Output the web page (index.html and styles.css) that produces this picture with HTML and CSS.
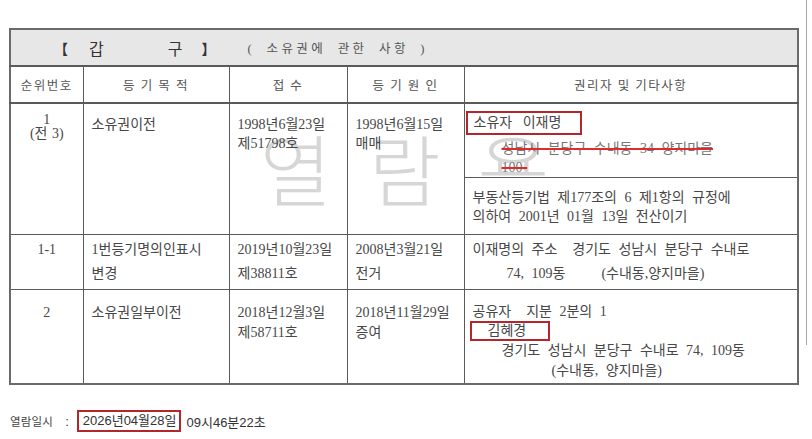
FILE: index.html
```html
<!DOCTYPE html>
<html lang="ko">
<head>
<meta charset="utf-8">
<title>갑구</title>
<link rel="stylesheet" href="styles.css">
</head>
<body>
<div class="page">
  <div class="wrap">
    <div class="watermark"><span>열</span><span>람</span><span>용</span></div>
    <table class="reg">
      <colgroup>
        <col class="w1"><col class="w2"><col class="w3"><col class="w4"><col class="w5">
      </colgroup>
      <tr class="title">
        <td colspan="5">
          <div class="title-in">
            <span class="br">【</span><span class="gap-a">갑</span><span class="gap-b">구</span><span class="br">】</span>
            <span class="sub">( 소유권에 관한 사항 )</span>
          </div>
        </td>
      </tr>
      <tr class="head">
        <th>순위번호</th>
        <th>등 기 목 적</th>
        <th>접 수</th>
        <th>등 기 원 인</th>
        <th>권리자 및 기타사항</th>
      </tr>
      <tr class="r1a">
        <td rowspan="2" class="num n1"><div class="ln14">1</div><div class="ln14 jeon">(전 3)</div></td>
        <td rowspan="2" class="txt p1"><div class="ln19">소유권이전</div></td>
        <td rowspan="2" class="txt p1"><div class="ln19">1998년6월23일</div><div class="ln19">제51798호</div></td>
        <td rowspan="2" class="txt p1"><div class="ln19">1998년6월15일</div><div class="ln19">매매</div></td>
        <td class="txt right-top">
          <div class="l1"><span class="mark mark-owner">소유자&nbsp;&nbsp;&nbsp;이재명</span></div>
          <div class="l2"><span class="strike">성남시 분당구 수내동 34 양지마을</span></div>
          <div class="l3"><span class="strike">100-</span></div>
        </td>
      </tr>
      <tr class="r1b">
        <td class="txt right-low"><div class="ln19">부동산등기법 제177조의 6 제1항의 규정에</div><div class="ln19">의하여 2001년 01월 13일 전산이기</div></td>
      </tr>
      <tr class="r2">
        <td class="num p2"><div class="ln24">1-1</div></td>
        <td class="txt p2"><div class="ln24">1번등기명의인표시</div><div class="ln24">변경</div></td>
        <td class="txt p2"><div class="ln24">2019년10월23일</div><div class="ln24">제38811호</div></td>
        <td class="txt p2"><div class="ln24">2008년3월21일</div><div class="ln24">전거</div></td>
        <td class="txt p2"><div class="ln24">이재명의 주소&nbsp;&nbsp;경기도 성남시 분당구 수내로</div><div class="ln24"><span class="ind1">74, 109동</span><span class="ind2">(수내동,양지마을)</span></div></td>
      </tr>
      <tr class="r3">
        <td class="num p3"><div class="ln20">2</div></td>
        <td class="txt p3"><div class="ln20">소유권일부이전</div></td>
        <td class="txt p3"><div class="ln20">2018년12월3일</div><div class="ln20">제58711호</div></td>
        <td class="txt p3"><div class="ln20">2018년11월29일</div><div class="ln20">증여</div></td>
        <td class="txt p3r">
          <div class="ln19">공유자&nbsp;&nbsp;지분 2분의 1</div>
          <div class="l-name"><span class="mark mark-name">김혜경</span></div>
          <div class="ln20 ind3">경기도 성남시 분당구 수내로 74, 109동</div>
          <div class="ln20 ind4">(수내동, 양지마을)</div>
        </td>
      </tr>
    </table>
  </div>
  <div class="footer">
    <span class="f-label">열람일시</span><span class="f-colon">:</span><span class="mark mark-date">2026년04월28일</span><span class="f-time">09시46분22초</span>
  </div>
</div>
</body>
</html>
```

FILE: styles.css
```css
html, body {
  margin: 0;
  padding: 0;
  background: #ffffff;
}

body {
  width: 812px;
  height: 439px;
  overflow: hidden;
  position: relative;
  font-family: "Liberation Serif", "Noto Sans CJK KR", serif;
  color: #474747;
}

body::after {
  content: "";
  position: absolute;
  left: 806px;
  top: 0;
  width: 1px;
  height: 345px;
  background: #a8a8a8;
}

.page {
  padding: 28px 0 0 9px;
}

.wrap {
  position: relative;
  width: 790px;
}

.watermark {
  position: absolute;
  left: 251px;
  top: 100px;
  z-index: 0;
  display: flex;
  gap: 37px;
  font-family: "Noto Sans CJK KR", sans-serif;
  font-weight: 300;
  font-size: 78px;
  line-height: 1;
  color: #d6d6d6;
  pointer-events: none;
}

.reg {
  position: relative;
  z-index: 1;
  width: 790px;
  table-layout: fixed;
  border-collapse: collapse;
  border: 2px solid #6a6a6a;
  font-size: 14px;
  letter-spacing: 0;
  word-spacing: 4px;
}

.w1 { width: 73px; }
.w2 { width: 146px; }
.w3 { width: 118px; }
.w4 { width: 117px; }
.w5 { width: 334px; }

.reg td, .reg th {
  border: 1px solid #5a5a5a;
  padding: 0;
  vertical-align: top;
}

.ln14, .ln19, .ln20, .ln24 {
  white-space: nowrap;
}
.ln14 { height: 14px; line-height: 14px; }
.ln19 { height: 19px; line-height: 19px; }
.ln20 { height: 20px; line-height: 20px; }
.ln24 { height: 24px; line-height: 24px; }

.jeon { word-spacing: 1px; }

/* rows */
.title { height: 37px; }
.head { height: 37px; }
.r1a { height: 74px; }
.r1b { height: 57px; }
.r2 { height: 55px; }
.r3 { height: 95px; }

/* title row */
.title td {
  background: #e7e7e7;
  vertical-align: middle;
  border-bottom: 2px solid #5a5a5a;
}

.title-in {
  display: flex;
  align-items: center;
  height: 34px;
  padding-left: 43px;
  font-size: 16px;
  color: #333333;
  word-spacing: 0;
}

.br {
  font-weight: bold;
  font-size: 14px;
}

.gap-a { margin-left: 21px; }
.gap-b { margin-left: 64px; margin-right: 19px; }

.sub {
  margin-left: 32px;
  font-size: 12.5px;
  letter-spacing: 3.4px;
  word-spacing: 5px;
  color: #555555;
}

/* header row */
.head th {
  vertical-align: middle;
  font-weight: normal;
  font-size: 12.5px;
  letter-spacing: 1.5px;
  word-spacing: 0;
  color: #555555;
  border-bottom: 2px solid #5a5a5a;
}

/* body cells */
.txt {
  padding-left: 8px !important;
  padding-right: 2px !important;
  text-align: left;
}

.num {
  text-align: center;
}

.p1 { padding-top: 11px !important; }
.n1 { padding-top: 9px !important; }

.right-top {
  padding-top: 7px !important;
}

.l1 {
  height: 24px;
}

.l2 {
  margin-top: 4px;
  padding-left: 29px;
  height: 20px;
  line-height: 20px;
  white-space: nowrap;
}

.l3 {
  padding-left: 29px;
  height: 17px;
  line-height: 17px;
}

.strike {
  text-decoration: line-through;
  text-decoration-color: #e02b2b;
  text-decoration-thickness: 1.5px;
  color: #777777;
}

.right-low {
  background: #ffffff;
  padding-top: 10px !important;
}

.p2 { padding-top: 3px !important; }

.ind1 { padding-left: 34px; }
.ind2 { padding-left: 36px; }

.p3 { padding-top: 13px !important; }
.p3r { padding-top: 12px !important; }

.l-name {
  height: 20px;
}

.ind3 { padding-left: 29px; }
.ind4 { padding-left: 79px; }

.mark {
  display: inline-block;
  border: 2px solid #b3262b;
  box-sizing: border-box;
  white-space: nowrap;
}

.mark-owner {
  margin-left: -7px;
  width: 116px;
  height: 24px;
  line-height: 20px;
  padding-left: 6px;
  word-spacing: 0;
}

.mark-name {
  margin-left: -3px;
  width: 80px;
  height: 20px;
  line-height: 16px;
  padding-left: 16px;
}

/* footer */
.footer {
  display: flex;
  align-items: center;
  height: 22px;
  margin-top: 25px;
  margin-left: 1px;
  font-family: "Liberation Sans", "Noto Sans CJK KR", sans-serif;
  font-size: 13px;
  color: #333333;
}

.f-label {
  font-size: 11.5px;
  letter-spacing: 0.2px;
  color: #444444;
}

.f-colon {
  margin-left: 12px;
  margin-right: 8px;
}

.mark-date {
  height: 22px;
  line-height: 18px;
  padding: 0 3px 0 4px;
}

.f-time {
  margin-left: 5px;
}
```
